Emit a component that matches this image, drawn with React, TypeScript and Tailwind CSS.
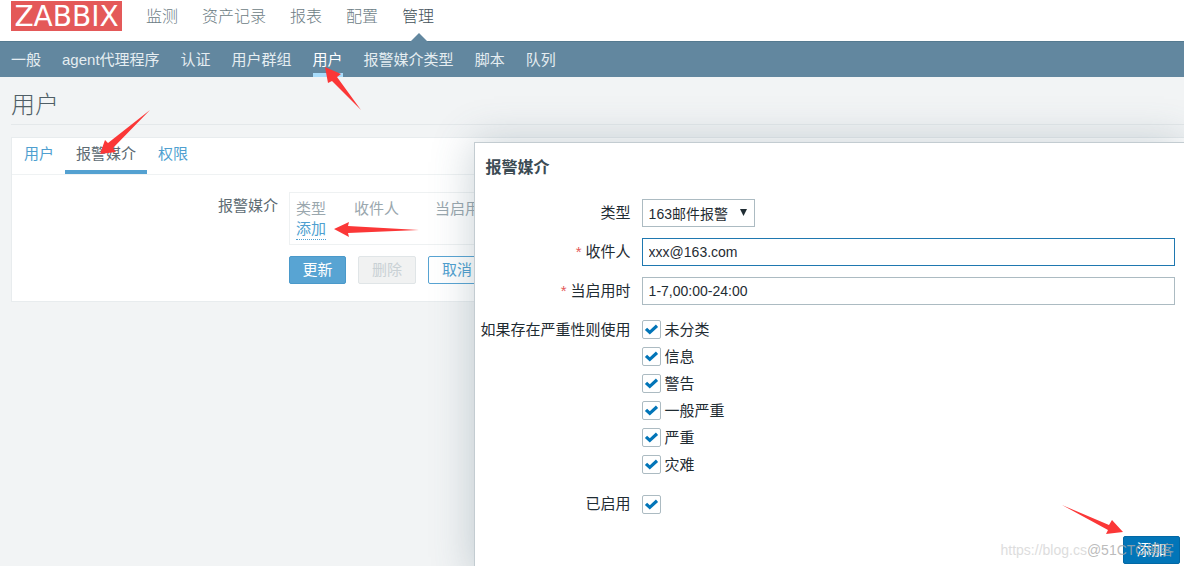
import { useState } from 'react';

const mainMenu = ['监测', '资产记录', '报表', '配置', '管理'];
const subMenu = ['一般', 'agent代理程序', '认证', '用户群组', '用户', '报警媒介类型', '脚本', '队列'];
const tabs = ['用户', '报警媒介', '权限'];
const severities = ['未分类', '信息', '警告', '一般严重', '严重', '灾难'];

interface ArrowProps {
  className: string;
  viewBox: string;
  points: string;
}

function Arrow({ className, viewBox, points }: ArrowProps) {
  return (
    <svg className={`absolute pointer-events-none ${className}`} viewBox={viewBox} aria-hidden="true">
      <polygon points={points} fill="#fb3737" />
    </svg>
  );
}

interface CheckProps {
  id: string;
  label?: string;
}

function Check({ id, label }: CheckProps) {
  const [checked, setChecked] = useState(true);

  return (
    <div className="flex items-center gap-1">
      <span className="relative block w-[19px] h-[19px]">
        <input
          id={id}
          type="checkbox"
          checked={checked}
          onChange={e => setChecked(e.target.checked)}
          className="block appearance-none w-full h-full bg-white border border-[#acbbc2] rounded-xs"
        />
        {checked && (
          <svg className="absolute inset-0 pointer-events-none" viewBox="0 0 19 19" fill="none" aria-hidden="true">
            <path d="M4 8.8 7.8 12.4 15 5.8" stroke="#0275b8" strokeWidth="3.2" />
          </svg>
        )}
      </span>
      {label && <label htmlFor={id}>{label}</label>}
    </div>
  );
}

function Header() {
  return (
    <header>
      <div className="flex h-[41px] bg-white pl-[11px]">
        <a href="#" className="mt-px w-[111px] h-[30px] bg-[#e45959] text-white text-[28px] leading-8 text-center font-['DejaVu_Sans',sans-serif]">
          ZABBIX
        </a>
        <nav className="flex gap-6 pl-6 text-[16px] leading-[34px] font-light text-[#6c7c84]">
          {mainMenu.map(item => (
            <a key={item} href="#" className={item === '管理' ? 'relative text-[#42515a]' : ''}>
              {item}
              {item === '管理' && (
                <svg className="absolute left-2 top-[33px] w-[18px] h-[9px]" viewBox="0 0 18 9" aria-hidden="true">
                  <path d="M0 9 9 0 18 9Z" fill="#62879f" />
                </svg>
              )}
            </a>
          ))}
        </nav>
      </div>
      <nav className="flex gap-[21px] h-9 pl-[11px] bg-[#62879f] border-t border-[#557a90] text-[15px] leading-[35px] text-[#e5edf1]">
        {subMenu.map(item => (
          <a
            key={item}
            href="#"
            className={item === '用户' ? 'relative border-b-4 border-[#a8dcfb] text-white' : ''}
          >
            {item}
            {item === '用户' && (
              <Arrow className="left-3 top-[25px] w-9 h-[43px]" viewBox="0 0 36 43" points="0,0 16,7 12,10 36,43 7,14 3,16" />
            )}
          </a>
        ))}
      </nav>
    </header>
  );
}

function UserForm() {
  return (
    <main className="pl-[11px]">
      <h1 className="h-12 border-b border-[#e4e8ea] text-2xl leading-[56px] font-light text-[#4f5e66]">用户</h1>
      <section className="mt-3 h-[165px] bg-white border border-r-0 border-[#e8ecee] text-[15px]">
        <div className="flex h-[37px] pl-px border-b border-[#eff2f3] leading-8 text-[#4f9fd0]">
          {tabs.map(tab => (
            <button
              key={tab}
              type="button"
              className={`px-[11px] border-b-4 ${tab === '报警媒介' ? 'relative border-[#54a1d1] text-[#5d6b73]' : 'border-transparent'}`}
            >
              {tab}
              {tab === '报警媒介' && (
                <Arrow className="left-[35px] -top-7 w-[50px] h-[46px]" viewBox="0 0 50 46" points="0,44 5,30 8,33 50,0 13,38 16,42" />
              )}
            </button>
          ))}
        </div>
        <div className="flex pt-[17px]">
          <div className="w-[266px] shrink-0 text-right leading-7 text-[#5d6b73]">报警媒介</div>
          <div className="flex-1 pl-[11px]">
            <div className="h-[53px] border border-[#eef1f2] px-[6px] pt-[6px]">
              <table className="text-left leading-5 text-[#9aa7ae]">
                <thead>
                  <tr>
                    <th className="w-[58px] font-normal">类型</th>
                    <th className="w-[81px] font-normal">收件人</th>
                    <th className="w-[120px] font-normal">当启用时</th>
                  </tr>
                </thead>
                <tbody>
                  <tr>
                    <td colSpan={3}>
                      <button type="button" className="relative block border-b border-dotted border-[#4f9fd0] leading-5 text-[#4f9fd0]">
                        添加
                        <Arrow className="left-[38px] top-[3px] w-[85px] h-[15px]" viewBox="0 0 85 15" points="0,7 15,0 14,4 85,8 14,11 15,15" />
                      </button>
                    </td>
                  </tr>
                </tbody>
              </table>
            </div>
            <div className="flex gap-3 pt-[11px] leading-[26px]">
              <button type="button" className="w-[57px] border border-[#4a99ca] rounded-xs bg-[#58a4d3] text-white">更新</button>
              <button type="button" disabled className="w-[58px] border border-[#e0e5e7] rounded-xs bg-[#f1f2f2] text-[#c9d1d5]">删除</button>
              <button type="button" className="w-[58px] border border-[#58a4d3] rounded-xs bg-white text-[#4f9fd0]">取消</button>
            </div>
          </div>
        </div>
      </section>
    </main>
  );
}

function MediaDialog() {
  return (
    <form
      role="dialog"
      aria-labelledby="dialog-title"
      className="absolute top-[142px] left-[40%] right-0 bg-white border border-r-0 border-[#c3ccd1] shadow-[0_0_40px_rgba(70,100,115,0.3)] text-[15px] text-[#1f2c33]"
    >
      <h2 id="dialog-title" className="pl-[11px] pt-3 text-[16px] leading-[26px] font-bold text-[#3c4b54]">报警媒介</h2>
      <div className="grid grid-cols-[156px_1fr] gap-[11px] pt-[18px] pr-[9px] leading-7">
        <label htmlFor="type" className="text-right">类型</label>
        <div className="relative w-[113px]">
          <select id="type" className="block appearance-none w-full h-7 pl-[6px] border border-[#acbbc2] bg-white text-[14px]">
            <option>163邮件报警</option>
          </select>
          <svg className="absolute right-2 top-[10px] w-[7px] h-[7px] pointer-events-none" viewBox="0 0 7 7" aria-hidden="true">
            <path d="M0 0H7L3.5 7Z" fill="#1f2c33" />
          </svg>
        </div>

        <label htmlFor="sendto" className="text-right">
          <span className="pr-1 text-[#e45959]">*</span>收件人
        </label>
        <input id="sendto" defaultValue="xxx@163.com" className="h-7 px-[6px] border border-[#1f78b0] text-[14px] outline-none" />

        <label htmlFor="period" className="text-right">
          <span className="pr-1 text-[#e45959]">*</span>当启用时
        </label>
        <input id="period" defaultValue="1-7,00:00-24:00" className="h-7 px-[6px] border border-[#acbbc2] text-[14px] outline-none" />

        <div id="severity" className="text-right">如果存在严重性则使用</div>
        <div role="group" aria-labelledby="severity" className="pb-px leading-[27px]">
          {severities.map((name, i) => (
            <Check key={name} id={`severity-${i}`} label={name} />
          ))}
        </div>

        <label htmlFor="enabled" className="text-right">已启用</label>
        <div className="flex items-center">
          <Check id="enabled" />
        </div>
      </div>
      <div className="flex justify-end pt-[18px] pr-1 pb-3">
        <button type="button" className="relative w-[57px] h-7 border border-[#0268a5] rounded-xs bg-[#0275b8] text-white">
          添加
          <Arrow className="right-[56px] -top-8 w-[61px] h-[30px]" viewBox="0 0 61 30" points="0,0 47,20 50,15 61,27 44,29 46,25" />
        </button>
      </div>
    </form>
  );
}

export default function App() {
  return (
    <div className="relative h-screen overflow-hidden bg-[#f2f4f5] font-['Liberation_Sans','Noto_Sans_CJK_SC',sans-serif]">
      <Header />
      <UserForm />
      <MediaDialog />
      <div className="absolute right-[10px] bottom-1 flex text-[14px] leading-6 pointer-events-none whitespace-nowrap">
        <span className="text-[#dddddd]">https://blog.cs</span>
        <span className="text-[#aaaaaa]/80">@51CTO博客</span>
      </div>
    </div>
  );
}
